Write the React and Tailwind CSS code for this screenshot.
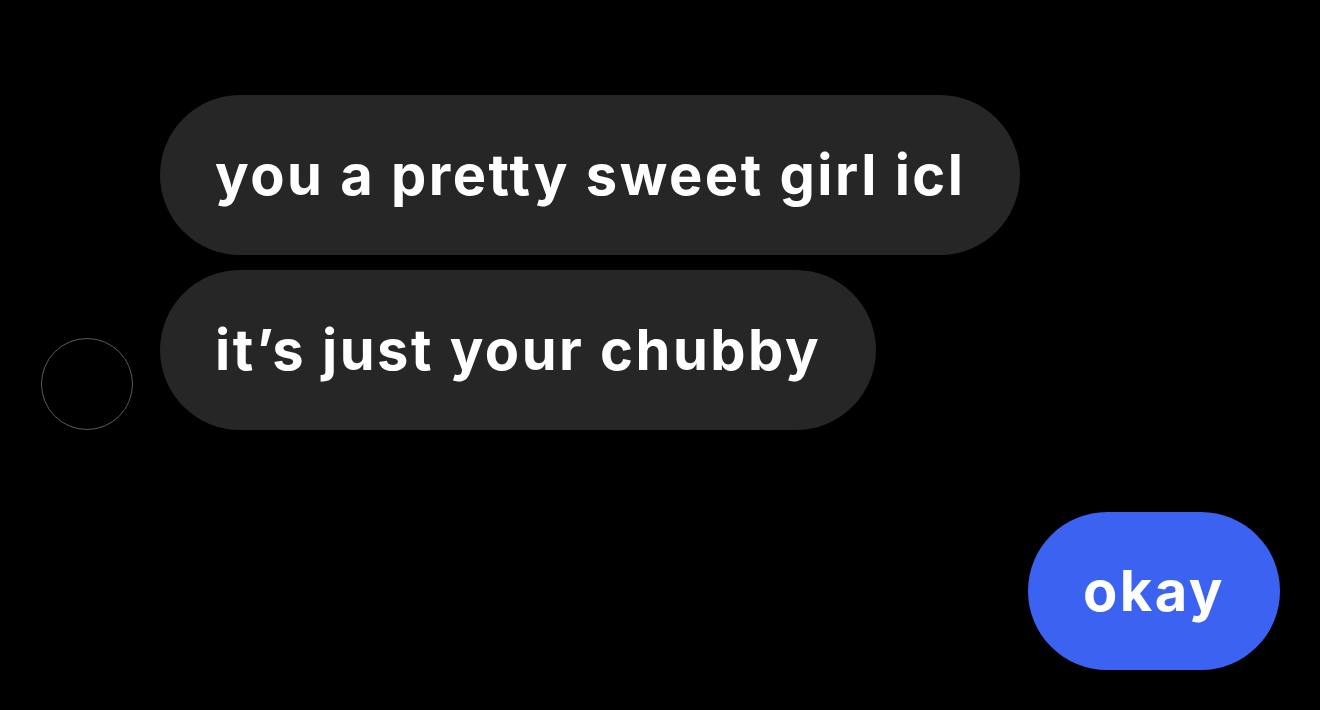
const incoming = ["you a pretty sweet girl icl", "it’s just your chubby"];

function Bubble({ text, mine }) {
  return (
    <div
      className={
        mine
          ? "flex h-[158px] items-center rounded-full bg-[#3c62f2] pl-[55px] pr-[55px] text-[56px] font-bold tracking-[2.5px] text-white"
          : "flex h-[160px] items-center rounded-full bg-[#262627] pl-[55px] pr-[55px] text-[56px] font-bold tracking-[2.5px] text-white"
      }
    >
      <span className="leading-none">{text}</span>
    </div>
  );
}

export default function App() {
  return (
    <div
      className="h-[710px] w-[1320px] overflow-hidden bg-black pl-[41px] pr-[40px] pt-[95px]"
      style={{ fontFamily: "Inter, 'Liberation Sans', sans-serif" }}
    >
      <div className="flex flex-col gap-[15px]">
        {incoming.map((text, i) => (
          <div key={i} className="flex items-end gap-[27px]">
            {i === incoming.length - 1 ? (
              <div className="h-[92px] w-[92px] shrink-0 rounded-full border border-[#5a5a5a]" />
            ) : (
              <div className="w-[92px] shrink-0" />
            )}
            <Bubble text={text} />
          </div>
        ))}
      </div>
      <div className="mt-[82px] flex justify-end">
        <Bubble text="okay" mine />
      </div>
    </div>
  );
}
